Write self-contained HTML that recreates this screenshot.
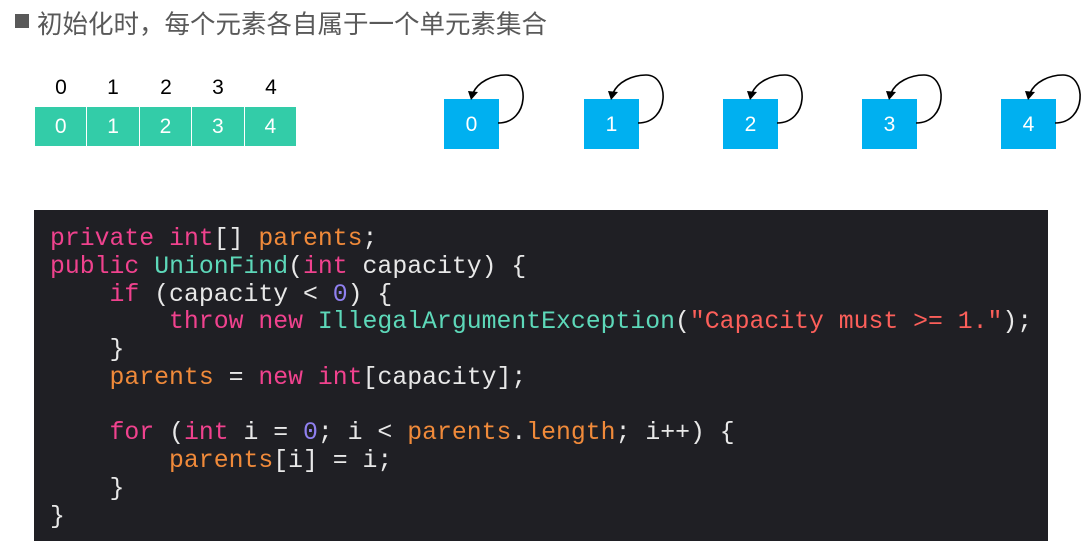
<!DOCTYPE html>
<html><head><meta charset="utf-8"><style>
body{margin:0;width:1084px;height:541px;background:#fff;position:relative;overflow:hidden;font-family:"Liberation Sans","Noto Sans CJK SC",sans-serif}
.t{position:absolute;left:37px;top:4px;font-size:25.5px;color:#595959;white-space:nowrap}
.b{position:absolute;left:15px;top:14px;width:14px;height:14px;background:#595959}
.lab{position:absolute;top:76px;width:52px;text-align:center;font-size:21px;color:#000}
.cell{position:absolute;top:107px;height:39px;width:51.4px;background:#33cca8;color:#fff;font-size:21px;text-align:center;line-height:40px}
.bx{position:absolute;top:99px;width:55px;height:50px;background:#00b0f0;color:#fff;font-size:21px;text-align:center;line-height:52px}
.code{position:absolute;left:34px;top:210px;width:1014px;height:331px;background:#1f1f24}
pre{margin:0;position:absolute;left:50px;top:226px;font-family:"Liberation Mono",monospace;font-size:24.8px;line-height:27.75px;color:#e8e8e8}
.k{color:#f0428e}.o{color:#f08a3a}.g{color:#5dd8b9}.s{color:#fc5f5a}.n{color:#9080f0}
</style></head><body>
<div class="b"></div><div class="t">初始化时，每个元素各自属于一个单元素集合</div>
<div class="lab" style="left:35px">0</div><div class="lab" style="left:87px">1</div><div class="lab" style="left:140px">2</div><div class="lab" style="left:192px">3</div><div class="lab" style="left:245px">4</div>
<div class="cell" style="left:35px">0</div><div class="cell" style="left:87.4px">1</div><div class="cell" style="left:139.8px">2</div><div class="cell" style="left:192.2px">3</div><div class="cell" style="left:244.6px">4</div>
<div class="bx" style="left:444px">0</div><div class="bx" style="left:584px">1</div><div class="bx" style="left:723px">2</div><div class="bx" style="left:862px">3</div><div class="bx" style="left:1001px">4</div>
<svg width="1084" height="160" style="position:absolute;left:0;top:0">
<defs><g id="lp"><path d="M54,24 C86,24 86,-24 62,-24 C48,-24 34,-17 29,-6" fill="none" stroke="#000" stroke-width="1.6"/><path d="M24,-8 L34,-7 L27,1 Z" fill="#000"/></g></defs>
<use href="#lp" x="444" y="99"/><use href="#lp" x="584" y="99"/><use href="#lp" x="723" y="99"/><use href="#lp" x="862" y="99"/><use href="#lp" x="1001" y="99"/>
</svg>
<div class="code"></div>
<pre><span class="k">private</span> <span class="k">int</span>[] <span class="o">parents</span>;
<span class="k">public</span> <span class="g">UnionFind</span>(<span class="k">int</span> capacity) {
    <span class="k">if</span> (capacity &lt; <span class="n">0</span>) {
        <span class="k">throw</span> <span class="k">new</span> <span class="g">IllegalArgumentException</span>(<span class="s">"Capacity must &gt;= 1."</span>);
    }
    <span class="o">parents</span> = <span class="k">new</span> <span class="k">int</span>[capacity];

    <span class="k">for</span> (<span class="k">int</span> i = <span class="n">0</span>; i &lt; <span class="o">parents</span>.<span class="o">length</span>; i++) {
        <span class="o">parents</span>[i] = i;
    }
}</pre>
</body></html>
